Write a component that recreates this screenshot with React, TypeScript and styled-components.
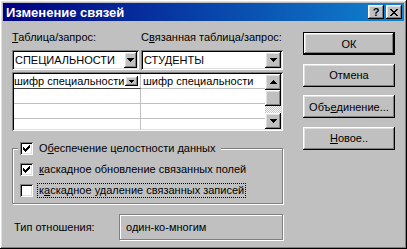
import React from "react"
import styled, { createGlobalStyle, css } from "styled-components"

const GlobalStyle = createGlobalStyle`
  html, body {
    margin: 0;
    padding: 0;
    background: #c0c0c0;
  }
  body {
    font-family: "Liberation Sans", Arial, sans-serif;
    font-size: 11px;
    color: #000;
  }
`

const raised = css`
  background: #c0c0c0;
  box-shadow: inset -1px -1px #000, inset 1px 1px #fff, inset -2px -2px #808080,
    inset 2px 2px #dfdfdf;
`

const sunken = css`
  background: #fff;
  box-shadow: inset 1px 1px #808080, inset -1px -1px #fff, inset 2px 2px #000,
    inset -2px -2px #dfdfdf;
`

const Window = styled.div`
  width: 407px;
  height: 249px;
  box-sizing: border-box;
  padding: 3px;
  display: flex;
  flex-direction: column;
  ${raised};
`

const TitleBar = styled.div`
  height: 18px;
  display: flex;
  align-items: center;
  justify-content: space-between;
  padding: 0 2px 0 3px;
  background: linear-gradient(to right, #000080, #1084d0);
  color: #fff;
  font-weight: bold;
  font-size: 13px;
`

const TitleButtons = styled.div`
  display: flex;
  gap: 2px;
`

const TitleButton = styled.div`
  width: 16px;
  height: 14px;
  display: flex;
  align-items: center;
  justify-content: center;
  color: #000;
  font-size: 11px;
  font-weight: bold;
  ${raised};
`

const Body = styled.div`
  flex: 1;
  display: flex;
`

const LeftCol = styled.div`
  width: 271px;
  margin-left: 9px;
  padding-top: 9px;
  display: flex;
  flex-direction: column;
`

const LabelsRow = styled.div`
  display: flex;
  height: 14px;
  line-height: 14px;
`

const FieldLabel = styled.div<{ $width?: number }>`
  width: ${(p) => (p.$width ? `${p.$width}px` : "auto")};
  white-space: nowrap;
`

const U = styled.span`
  text-decoration: underline;
`

const CombosRow = styled.div`
  display: flex;
  gap: 2px;
  margin-top: 6px;
`

const Combo = styled.div<{ $width: number }>`
  width: ${(p) => p.$width}px;
  height: 20px;
  box-sizing: border-box;
  padding: 2px;
  display: flex;
  align-items: center;
  ${sunken};
`

const ComboText = styled.div`
  flex: 1;
  padding-left: 1px;
  white-space: nowrap;
  overflow: hidden;
`

const DropButton = styled.div<{ $width: number; $height: number }>`
  width: ${(p) => p.$width}px;
  height: ${(p) => p.$height}px;
  flex-shrink: 0;
  display: flex;
  align-items: center;
  justify-content: center;
  ${raised};
`

const Grid = styled.div`
  margin-top: 2px;
  height: 59px;
  box-sizing: border-box;
  padding: 2px;
  display: flex;
  ${sunken};
`

const Table = styled.div`
  flex: 1;
  display: grid;
  grid-template-columns: 127px 1fr;
  grid-auto-rows: 15px;
  align-content: start;
  overflow: hidden;
`

const Cell = styled.div<{ $pad: number; $last?: boolean; $active?: boolean }>`
  box-sizing: border-box;
  display: flex;
  align-items: center;
  padding-left: ${(p) => p.$pad}px;
  border-right: ${(p) => (p.$last ? "none" : "1px solid #c0c0c0")};
  border-bottom: 1px solid ${(p) => (p.$active ? "#404040" : "#c0c0c0")};
  white-space: nowrap;
  overflow: hidden;
`

const CellText = styled.span`
  flex: 1;
  overflow: hidden;
`

const Scrollbar = styled.div`
  width: 16px;
  display: flex;
  flex-direction: column;
`

const ScrollButton = styled.div`
  height: 16px;
  display: flex;
  align-items: center;
  justify-content: center;
  ${raised};
`

const Thumb = styled.div`
  height: 16px;
  ${raised};
`

const Track = styled.div`
  flex: 1;
  background: repeating-conic-gradient(#fff 0 25%, #c0c0c0 0 50%) 0 0 / 2px 2px;
`

const GroupBox = styled.fieldset`
  margin: 11px 0 0;
  padding: 0 0 6px 5px;
  border: 1px solid #808080;
  box-shadow: inset 1px 1px #fff, 1px 1px #fff;
  min-inline-size: 0;
`

const Legend = styled.legend`
  padding: 0 5px 0 2px;
  background: #c0c0c0;
`

const CheckList = styled.div`
  margin-top: 8px;
  display: flex;
  flex-direction: column;
  gap: 8px;
  padding-left: 2px;
`

const CheckRow = styled.div`
  display: flex;
  align-items: center;
  gap: 5px;
  height: 13px;
  white-space: nowrap;
`

const CheckBox = styled.div`
  width: 13px;
  height: 13px;
  box-sizing: border-box;
  display: flex;
  align-items: center;
  justify-content: center;
  ${sunken};
`

const CheckLabel = styled.span<{ $focused?: boolean }>`
  line-height: 13px;
  outline: ${(p) => (p.$focused ? "1px dotted #000" : "none")};
  outline-offset: 0;
  padding: 0 1px;
`

const RelationRow = styled.div`
  display: flex;
  align-items: center;
  margin-top: 10px;
`

const RelationLabel = styled.div`
  width: 105px;
  padding-left: 2px;
`

const RelationBox = styled.div`
  flex: 1;
  height: 26px;
  box-sizing: border-box;
  border: 1px solid #808080;
  box-shadow: inset 1px 1px #fff, 1px 1px #fff;
  padding-left: 6px;
  display: flex;
  align-items: center;
`

const RightCol = styled.div`
  width: 92px;
  margin-left: 20px;
  padding-top: 11px;
  display: flex;
  flex-direction: column;
  gap: 8.5px;
`

const PushButton = styled.div<{ $default?: boolean }>`
  height: 23px;
  box-sizing: border-box;
  display: flex;
  align-items: center;
  justify-content: center;
  white-space: nowrap;
  ${raised};
  ${(p) =>
    p.$default &&
    css`
      border: 1px solid #000;
    `}
`

const Bitmap: React.FC<{ rows: string[] }> = ({ rows }) => (
  <svg width={rows[0].length} height={rows.length} shapeRendering="crispEdges">
    {rows.flatMap((r, y) =>
      [...r].map((c, x) =>
        c === "x" ? <rect key={`${x}-${y}`} x={x} y={y} width={1} height={1} fill="#000" /> : null
      )
    )}
  </svg>
)

const closeRows = ["xx....xx", ".xx..xx.", "..xxxx..", "...xx...", "..xxxx..", ".xx..xx.", "xx....xx"]
const downRows = ["xxxxxxx", ".xxxxx.", "..xxx..", "...x..."]
const upRows = ["...x...", "..xxx..", ".xxxxx.", "xxxxxxx"]
const smallDownRows = ["xxxxx", ".xxx.", "..x.."]
const checkRows = ["......x", ".....xx", "x...xxx", "xx.xxx.", "xxxxx..", ".xxx...", "..x...."]

const Check: React.FC<{ checked?: boolean }> = ({ checked }) => (
  <CheckBox>{checked && <Bitmap rows={checkRows} />}</CheckBox>
)

const App: React.FC = () => {
  return (
    <>
      <GlobalStyle />
      <Window>
        <TitleBar>
          <span>Изменение связей</span>
          <TitleButtons>
            <TitleButton>?</TitleButton>
            <TitleButton>
              <Bitmap rows={closeRows} />
            </TitleButton>
          </TitleButtons>
        </TitleBar>
        <Body>
          <LeftCol>
            <LabelsRow>
              <FieldLabel $width={129}>
                <U>Т</U>аблица/запрос:
              </FieldLabel>
              <FieldLabel>
                С<U>в</U>язанная таблица/запрос:
              </FieldLabel>
            </LabelsRow>
            <CombosRow>
              <Combo $width={127}>
                <ComboText>СПЕЦИАЛЬНОСТИ</ComboText>
                <DropButton $width={13} $height={16}>
                  <Bitmap rows={downRows} />
                </DropButton>
              </Combo>
              <Combo $width={142}>
                <ComboText>СТУДЕНТЫ</ComboText>
                <DropButton $width={16} $height={16}>
                  <Bitmap rows={downRows} />
                </DropButton>
              </Combo>
            </CombosRow>
            <Grid>
              <Table>
                <Cell $pad={0} $active>
                  <CellText>шифр специальности</CellText>
                  <DropButton $width={13} $height={10} style={{ marginRight: 2 }}>
                    <Bitmap rows={smallDownRows} />
                  </DropButton>
                </Cell>
                <Cell $pad={2} $last>
                  шифр специальности
                </Cell>
                <Cell $pad={0} />
                <Cell $pad={2} $last />
                <Cell $pad={0} />
                <Cell $pad={2} $last />
                <Cell $pad={0} />
                <Cell $pad={2} $last />
              </Table>
              <Scrollbar>
                <ScrollButton>
                  <Bitmap rows={upRows} />
                </ScrollButton>
                <Thumb />
                <Track />
                <ScrollButton>
                  <Bitmap rows={downRows} />
                </ScrollButton>
              </Scrollbar>
            </Grid>
            <GroupBox>
              <Legend>
                <CheckRow>
                  <Check checked />
                  <CheckLabel>
                    О<U>б</U>еспечение целостности данных
                  </CheckLabel>
                </CheckRow>
              </Legend>
              <CheckList>
                <CheckRow>
                  <Check checked />
                  <CheckLabel>
                    <U>к</U>аскадное обновление связанных полей
                  </CheckLabel>
                </CheckRow>
                <CheckRow>
                  <Check />
                  <CheckLabel $focused>
                    к<U>а</U>скадное удаление связанных записей
                  </CheckLabel>
                </CheckRow>
              </CheckList>
            </GroupBox>
            <RelationRow>
              <RelationLabel>Тип отношения:</RelationLabel>
              <RelationBox>один-ко-многим</RelationBox>
            </RelationRow>
          </LeftCol>
          <RightCol>
            <PushButton $default>ОК</PushButton>
            <PushButton>Отмена</PushButton>
            <PushButton>
              Объ<U>е</U>динение...
            </PushButton>
            <PushButton>
              <U>Н</U>овое..
            </PushButton>
          </RightCol>
        </Body>
      </Window>
    </>
  )
}

export default App
